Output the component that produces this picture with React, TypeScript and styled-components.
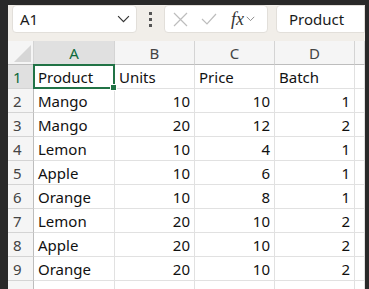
import React from "react";
import styled, { createGlobalStyle } from "styled-components";

const GlobalStyle = createGlobalStyle`
  html, body {
    margin: 0;
    padding: 0;
    background: #292929;
  }
  * {
    box-sizing: border-box;
  }
`;

const COLUMNS = ["A", "B", "C", "D", ""];
const WIDTHS = "26px 81px 80px 80px 80px 1fr";

const ROWS: [string, number, number, number][] = [
  ["Mango", 10, 10, 1],
  ["Mango", 20, 12, 2],
  ["Lemon", 10, 4, 1],
  ["Apple", 10, 6, 1],
  ["Orange", 10, 8, 1],
  ["Lemon", 20, 10, 2],
  ["Apple", 20, 10, 2],
  ["Orange", 20, 10, 2]
];

const Chevron = ({ size = 12, color = "#444" }: { size?: number; color?: string }) => (
  <svg width={size} height={size * 0.6} viewBox="0 0 12 7" fill="none">
    <path d="M1 1l5 5 5-5" stroke={color} strokeWidth="1.1" />
  </svg>
);

const App = () => {
  return (
    <>
      <GlobalStyle />
      <Screen>
        <Frame>
          <Toolbar>
            <NameBox>
              <NameText>A1</NameText>
              <Chevron size={13} color="#333" />
            </NameBox>
            <Dots>
              <i />
              <i />
              <i />
            </Dots>
            <ActionBox>
              <svg width="15" height="15" viewBox="0 0 15 15">
                <path d="M1 1l13 13M14 1L1 14" stroke="#bdbdbd" strokeWidth="1.2" />
              </svg>
              <svg width="16" height="12" viewBox="0 0 16 12">
                <path d="M1 6l5 5L15 1" stroke="#bdbdbd" strokeWidth="1.2" fill="none" />
              </svg>
              <Fx>
                <FxText>fx</FxText>
                <Chevron size={9} color="#777" />
              </Fx>
            </ActionBox>
            <ContentBox>Product</ContentBox>
          </Toolbar>

          <Grid>
            <Corner>
              <svg width="17" height="17" viewBox="0 0 17 17">
                <path d="M17 0V17H0Z" fill="#d6d6d6" />
              </svg>
            </Corner>
            {COLUMNS.map((c, i) => (
              <ColHeader key={"h" + i} $active={c === "A"}>
                {c}
              </ColHeader>
            ))}

            <RowHeader $active>1</RowHeader>
            <Cell $selected>
              Product
              <Handle />
            </Cell>
            <Cell>Units</Cell>
            <Cell>Price</Cell>
            <Cell>Batch</Cell>
            <Cell />

            {ROWS.map((r, i) => (
              <React.Fragment key={i}>
                <RowHeader>{i + 2}</RowHeader>
                <Cell>{r[0]}</Cell>
                <Cell $num>{r[1]}</Cell>
                <Cell $num>{r[2]}</Cell>
                <Cell $num>{r[3]}</Cell>
                <Cell />
              </React.Fragment>
            ))}

            <RowHeader>10</RowHeader>
            <Cell />
            <Cell />
            <Cell />
            <Cell />
            <Cell />
          </Grid>
        </Frame>
      </Screen>
    </>
  );
};

const Screen = styled.div`
  width: 369px;
  height: 289px;
  padding: 5px 4px 0 8px;
  overflow: hidden;
  font-family: "Noto Sans", "Open Sans", sans-serif;
`;

const Frame = styled.div`
  width: 357px;
  height: 284px;
  background: #f1eee9;
  overflow: hidden;
`;

const Toolbar = styled.div`
  height: 36px;
  display: flex;
  align-items: flex-start;
  padding-left: 4px;
`;

const Box = styled.div`
  height: 28px;
  background: #fff;
  border: 1px solid #e2dfda;
  border-radius: 4px;
  display: flex;
  align-items: center;
`;

const NameBox = styled(Box)`
  width: 125px;
  padding: 0 6px 0 7px;
  justify-content: space-between;
`;

const NameText = styled.span`
  font-size: 15px;
  color: #1a1a1a;
`;

const Dots = styled.div`
  width: 27px;
  height: 28px;
  display: flex;
  flex-direction: column;
  align-items: center;
  justify-content: center;
  gap: 3px;

  i {
    width: 3px;
    height: 3px;
    background: #555;
  }
`;

const ActionBox = styled(Box)`
  width: 104px;
  padding: 0 6px 0 8px;
  gap: 13px;
`;

const Fx = styled.div`
  display: flex;
  align-items: center;
  gap: 2px;
  margin-left: 1px;
`;

const FxText = styled.span`
  font-family: "Liberation Serif", "DejaVu Serif", serif;
  font-style: italic;
  font-size: 18px;
  color: #333;
  line-height: 1;
`;

const ContentBox = styled(Box)`
  flex: 1;
  margin-left: 8px;
  padding-left: 12px;
  border-top-right-radius: 0;
  border-bottom-right-radius: 0;
  font-size: 15px;
  color: #1a1a1a;
`;

const Grid = styled.div`
  display: grid;
  grid-template-columns: ${WIDTHS};
  grid-auto-rows: 24px;
  background: #fff;
`;

const Corner = styled.div`
  background: #f5f5f5;
  border-right: 1px solid #d4d4d4;
  border-bottom: 1px solid #bdbdbd;
  display: flex;
  align-items: flex-end;
  justify-content: flex-end;
  padding: 0 2px 2px 0;
`;

const ColHeader = styled.div<{ $active?: boolean }>`
  background: ${(p) => (p.$active ? "#e0e0e0" : "#f5f5f5")};
  color: ${(p) => (p.$active ? "#0e6a3b" : "#444")};
  border-right: 1px solid #d4d4d4;
  border-bottom: 1px solid #bdbdbd;
  font-size: 15px;
  display: flex;
  align-items: center;
  justify-content: center;
`;

const RowHeader = styled.div<{ $active?: boolean }>`
  background: ${(p) => (p.$active ? "#e0e0e0" : "#f5f5f5")};
  color: ${(p) => (p.$active ? "#0e6a3b" : "#444")};
  border-right: 1px solid #bdbdbd;
  border-bottom: 1px solid #d4d4d4;
  font-size: 15px;
  display: flex;
  align-items: center;
  padding-left: 5px;
`;

const Cell = styled.div<{ $num?: boolean; $selected?: boolean }>`
  position: relative;
  border-right: 1px solid #e1e1e1;
  border-bottom: 1px solid #e1e1e1;
  font-size: 15px;
  color: #111;
  display: flex;
  align-items: center;
  justify-content: ${(p) => (p.$num ? "flex-end" : "flex-start")};
  padding: 1px 4px 0 4px;
  white-space: nowrap;

  ${(p) =>
    p.$selected &&
    `
    &::after {
      content: "";
      position: absolute;
      left: -1px;
      top: -1px;
      right: -1px;
      bottom: -1px;
      border: 2px solid #217346;
    }
  `}
`;

const Handle = styled.span`
  position: absolute;
  right: -3px;
  bottom: -3px;
  width: 5px;
  height: 5px;
  background: #217346;
  border: 1px solid #fff;
  box-sizing: content-box;
  z-index: 2;
`;

export default App;
